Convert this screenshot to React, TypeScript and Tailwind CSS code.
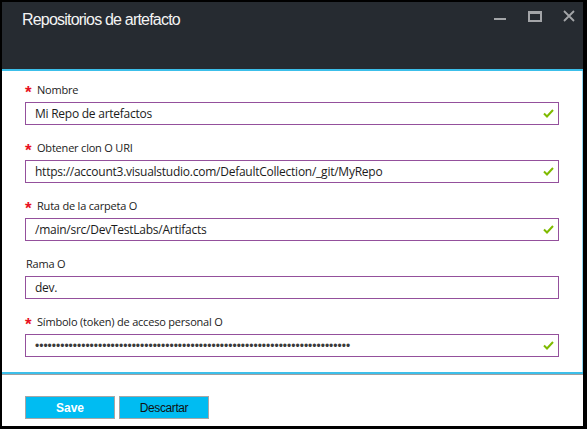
import React from "react"

const fields = [
  { label: "Nombre", value: "Mi Repo de artefactos", required: true, check: true },
  {
    label: "Obtener clon O URI",
    value: "https://account3.visualstudio.com/DefaultCollection/_git/MyRepo",
    required: true,
    check: true,
  },
  { label: "Ruta de la carpeta O", value: "/main/src/DevTestLabs/Artifacts", required: true, check: true },
  { label: "Rama O", value: "dev.", required: false, check: false },
  {
    label: "Símbolo (token) de acceso personal O",
    value: "•".repeat(75),
    required: true,
    check: true,
    secret: true,
  },
]

function Check() {
  return (
    <svg width="11" height="9" viewBox="0 0 11 9" className="shrink-0">
      <polyline points="1,4.5 4,7.5 10,1" fill="none" stroke="#7fba00" strokeWidth="2" />
    </svg>
  )
}

export default function App() {
  return (
    <div className="w-[587px] h-[429px] bg-black pt-[2px] pl-[2px] pr-[4px] pb-[3px] font-['Liberation_Sans',Arial,sans-serif]">
      <div className="h-full flex flex-col bg-white">
        {/* Header */}
        <div className="h-[67px] shrink-0 bg-[#262b31] flex items-start justify-between pl-[20px] pr-[8px] pt-[8px]">
          <h1 className="text-[#f4f4f4] text-[16px] leading-[20px] tracking-[-0.8px]">Repositorios de artefacto</h1>
          <div className="flex items-start pt-[0px]">
            <div className="w-[12px] h-[2px] mt-[8px] bg-[#a3a5a8]" />
            <div className="w-[14px] h-[11px] mt-[1px] ml-[22px] border-2 border-t-[3px] border-[#a3a5a8]" />
            <svg width="12" height="12" viewBox="0 0 12 12" className="ml-[21px]">
              <path d="M1 1 L11 11 M11 1 L1 11" stroke="#a3a5a8" strokeWidth="1.8" />
            </svg>
          </div>
        </div>
        <div className="h-[2px] shrink-0 bg-[#3cbfea]" />

        {/* Form */}
        <div className="flex-1 border-r border-[#8fd8f2] px-[23px] pt-[11px] flex flex-col gap-[15px]">
          {fields.map((f) => (
            <div key={f.label} className="flex flex-col gap-[4px]">
              <div className="h-[16px] flex items-center text-[11px] text-[#1b1b1b] font-['Open_Sans',sans-serif] tracking-[-0.2px]">
                {f.required ? (
                  <>
                    <span className="text-[#e81123] text-[17px] font-bold leading-none w-[12px] pt-[5px] font-['Liberation_Sans',sans-serif]">*</span>
                    <span>{f.label}</span>
                  </>
                ) : (
                  <span className="pl-[1px]">{f.label}</span>
                )}
              </div>
              <div className="h-[23px] border border-[#94509c] flex items-center justify-between pl-[9px] pr-[4px]">
                <span
                  className={
                    f.secret
                      ? "text-[12px] text-[#3a3a3a] leading-none"
                      : "text-[12px] text-[#1b1b1b] font-['Open_Sans',sans-serif] tracking-[-0.25px]"
                  }
                >
                  {f.value}
                </span>
                {f.check && <Check />}
              </div>
            </div>
          ))}
        </div>
        <div className="h-[2px] shrink-0 bg-[#3cbfea]" />
        <div className="h-[1px] shrink-0 bg-[#a0a0a0]" />

        {/* Footer */}
        <div className="h-[51px] shrink-0 px-[23px] pt-[21px] flex gap-[4px]">
          <button className="w-[90px] h-[23px] bg-[#00bcf2] border border-[#a6a6a6] text-white text-[12px] font-bold">
            Save
          </button>
          <button className="w-[90px] h-[23px] bg-[#00bcf2] border border-[#a6a6a6] text-[#111] text-[12px] tracking-[-0.4px]">
            Descartar
          </button>
        </div>
      </div>
    </div>
  )
}
